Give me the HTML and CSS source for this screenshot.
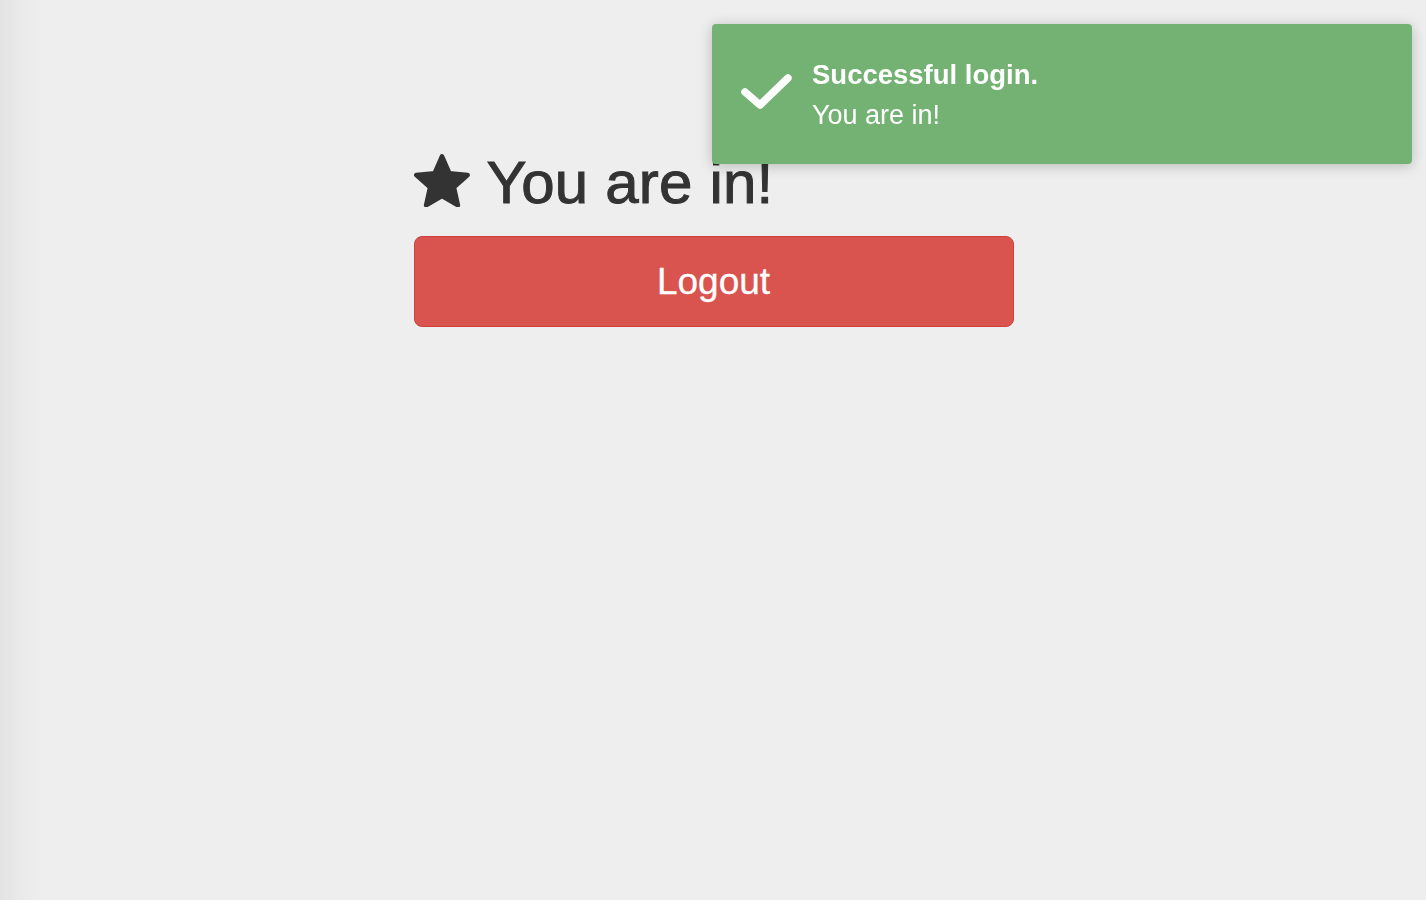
FILE: index.html
```html
<!DOCTYPE html>
<html lang="en">
<head>
<meta charset="utf-8">
<title>You are in!</title>
<link rel="stylesheet" href="styles.css">
</head>
<body>
<main class="page">
  <section class="panel">
    <h1 class="title">
      <svg class="star" viewBox="0 0 56 53" aria-hidden="true">
        <polygon points="28,2.4 35.35,19.29 53.68,21.06 39.89,33.26 43.87,51.24 28,41.9 12.13,51.24 16.11,33.26 2.32,21.06 20.65,19.29" />
      </svg>
      <span>You are in!</span>
    </h1>
    <button class="logout" type="button">Logout</button>
  </section>
</main>
<div class="toast" role="status">
  <svg class="check" viewBox="0 0 56 44" aria-hidden="true">
    <polyline points="5,19 20,32 48,5" />
  </svg>
  <div class="toast-text">
    <div class="toast-title">Successful login.</div>
    <div class="toast-msg">You are in!</div>
  </div>
</div>
</body>
</html>
```

FILE: styles.css
```css
html, body {
  margin: 0;
  padding: 0;
  height: 100%;
}

body {
  background: linear-gradient(to right, #e3e3e3 0px, #e9e9e9 18px, #eeeeee 42px, #eeeeee 100%);
  font-family: "Liberation Sans", Arial, Helvetica, sans-serif;
  color: #333333;
}

.page {
  display: flex;
  justify-content: center;
  padding-top: 150px;
}

.panel {
  width: 600px;
  display: flex;
  flex-direction: column;
  margin-left: 1px;
}

.title {
  margin: 0 0 20px 0;
  font-size: 60px;
  line-height: 1.1;
  font-weight: normal;
  display: flex;
  align-items: center;
  gap: 17px;
  letter-spacing: 0.2px;
  -webkit-text-stroke: 1px #333333;
}

.star {
  width: 56px;
  height: 53px;
  flex: none;
  position: relative;
  top: -3px;
}

.star polygon {
  fill: #333333;
  stroke: #333333;
  stroke-width: 4.6;
  stroke-linejoin: round;
}

.logout {
  height: 91px;
  width: 600px;
  background: #d9534f;
  border: 1px solid #d0413c;
  border-radius: 8px;
  color: #ffffff;
  font-family: "Liberation Sans", Arial, Helvetica, sans-serif;
  font-size: 37px;
  padding: 0;
  cursor: pointer;
  -webkit-text-stroke: 0.3px #ffffff;
}

.toast {
  position: fixed;
  top: 24px;
  right: 14px;
  width: 700px;
  box-sizing: border-box;
  height: 140px;
  padding: 31px 20px 29px 30px;
  background: #73b273;
  border-radius: 4px;
  box-shadow: 0 2px 14px rgba(0, 0, 0, 0.22);
  display: flex;
  align-items: center;
  color: #ffffff;
}

.check {
  width: 56px;
  height: 44px;
  flex: none;
  margin-right: 16px;
  margin-left: -2px;
}

.check polyline {
  fill: none;
  stroke: #ffffff;
  stroke-width: 7.5;
  stroke-linecap: round;
  stroke-linejoin: round;
}

.toast-text {
  font-size: 27px;
  line-height: 40px;
}

.toast-title {
  font-weight: bold;
  font-size: 27.5px;
}
```
